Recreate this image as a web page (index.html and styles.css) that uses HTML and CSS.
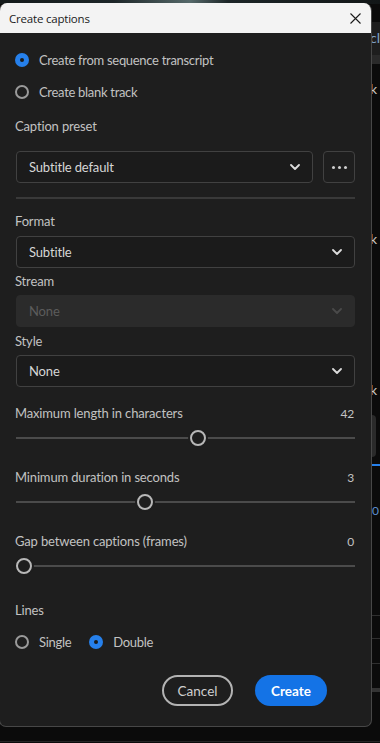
FILE: index.html
```html
<!DOCTYPE html>
<html lang="en">
<head>
<meta charset="utf-8">
<title>Create captions</title>
<link rel="stylesheet" href="styles.css">
</head>
<body>
<div class="backdrop">
  <div class="bg-top"></div>
  <div class="bg-band1"><span class="bg-text blue">cl</span></div>
  <div class="bg-band2"></div>
  <span class="bg-text k1">k</span>
  <span class="bg-text k2">k</span>
  <span class="bg-text k3">k</span>
  <div class="bg-box"></div>
  <div class="bg-blue"></div>
  <span class="bg-text blue n00">0</span>
  <div class="bg-line l1"></div>
  <div class="bg-line l2"></div>
  <div class="bg-line l3"></div>
  <div class="bg-band3"></div>
  <div class="bg-line l4"></div>
</div>

<div class="dialog">
  <div class="titlebar">
    <span class="title">Create captions</span>
    <svg class="close" width="11" height="11" viewBox="0 0 11 11"><path d="M0.5 0.5 L10.5 10.5 M10.5 0.5 L0.5 10.5" stroke="#1a1a1a" stroke-width="1.1" fill="none"/></svg>
  </div>

  <div class="content">
    <div class="radio-row">
      <span class="radio checked"></span><span class="rlabel">Create from sequence transcript</span>
    </div>
    <div class="radio-row">
      <span class="radio"></span><span class="rlabel">Create blank track</span>
    </div>

    <div class="label preset-label">Caption preset</div>
    <div class="preset-row">
      <div class="select grow">
        <span>Subtitle default</span>
        <svg class="chev" width="10" height="6" viewBox="0 0 10 6"><path d="M1 1 L5 5 L9 1" stroke="#dcdcdc" stroke-width="1.8" fill="none" stroke-linecap="round" stroke-linejoin="round"/></svg>
      </div>
      <div class="more">
        <span class="dot"></span><span class="dot"></span><span class="dot"></span>
      </div>
    </div>
    <div class="sep"></div>

    <div class="label format-label">Format</div>
    <div class="select mt5">
      <span>Subtitle</span>
      <svg class="chev" width="10" height="6" viewBox="0 0 10 6"><path d="M1 1 L5 5 L9 1" stroke="#dcdcdc" stroke-width="1.8" fill="none" stroke-linecap="round" stroke-linejoin="round"/></svg>
    </div>
    <div class="label mt3">Stream</div>
    <div class="select disabled mt4">
      <span>None</span>
      <svg class="chev" width="10" height="6" viewBox="0 0 10 6"><path d="M1 1 L5 5 L9 1" stroke="#4a4a4a" stroke-width="1.8" fill="none" stroke-linecap="round" stroke-linejoin="round"/></svg>
    </div>
    <div class="label mt4">Style</div>
    <div class="select mt4">
      <span>None</span>
      <svg class="chev" width="10" height="6" viewBox="0 0 10 6"><path d="M1 1 L5 5 L9 1" stroke="#dcdcdc" stroke-width="1.8" fill="none" stroke-linecap="round" stroke-linejoin="round"/></svg>
    </div>

    <div class="label slider-label first">
      <span>Maximum length in characters</span><span class="val">42</span>
    </div>
    <div class="slider"><div class="track"></div><span class="thumb" style="left: calc(0.538 * (100% - 16px));"></span></div>

    <div class="label slider-label">
      <span>Minimum duration in seconds</span><span class="val">3</span>
    </div>
    <div class="slider"><div class="track"></div><span class="thumb" style="left: calc(0.375 * (100% - 16px));"></span></div>

    <div class="label slider-label">
      <span>Gap between captions (frames)</span><span class="val">0</span>
    </div>
    <div class="slider"><div class="track"></div><span class="thumb" style="left: 0;"></span></div>

    <div class="label lines-label">Lines</div>
    <div class="lines-row">
      <div class="radio-inline"><span class="radio"></span><span class="rlabel">Single</span></div>
      <div class="radio-inline"><span class="radio checked"></span><span class="rlabel">Double</span></div>
    </div>

    <div class="buttons">
      <button class="btn cancel">Cancel</button>
      <button class="btn create">Create</button>
    </div>
  </div>
</div>
</body>
</html>
```

FILE: styles.css
```css
* { box-sizing: border-box; }

html, body {
  margin: 0;
  padding: 0;
}

body {
  width: 380px;
  height: 743px;
  overflow: hidden;
  background: #0b0b0b;
  position: relative;
  font-family: Lato, "Noto Sans", sans-serif;
  padding-top: 3px;
}

/* background app (free canvas behind the dialog window) */
.backdrop { position: absolute; inset: 0; }
.bg-top {
  position: absolute; left: 0; top: 0; width: 380px; height: 4px;
  background: linear-gradient(90deg, #141a1b 0%, #1d2628 30%, #56696a 50%, #1c2527 60%, #121617 100%);
}
.bg-band1 {
  position: absolute; left: 0; top: 22px; width: 380px; height: 33px;
  background: #1e1e1e;
}
.bg-band2 {
  position: absolute; left: 0; top: 55px; width: 380px; height: 9px;
  background: #2a2a2a;
}
.bg-text {
  position: absolute; font-size: 14px; color: #c8c8c8; left: 370px;
}
.bg-band1 .bg-text { top: 7px; }
.blue { color: #7fa0c8; }
.k1 { top: 80px; }
.k2 { top: 230px; }
.k3 { top: 381px; }
.bg-box {
  position: absolute; left: 366px; top: 415px; width: 10px; height: 42px;
  background: #2a2a2a; border-radius: 4px;
}
.bg-blue {
  position: absolute; left: 372px; top: 464px; width: 8px; height: 2px; background: #2680eb;
}
.n00 { top: 503px; font-size: 12px; color: #5d8fd0; left: 372px; }
.bg-line { position: absolute; left: 372px; width: 8px; height: 1px; background: #2f2f2f; }
.l1 { top: 615px; }
.l2 { top: 638px; }
.l3 { top: 663px; }
.l4 { top: 741px; left: 0; width: 380px; background: #262626; }
.bg-band3 {
  position: absolute; left: 372px; top: 688px; width: 8px; height: 4px; background: #333;
}

/* dialog window */
.dialog {
  position: relative;
  margin-left: -1px;
  width: 373px;
  height: 724px;
  background: #1e1e1e;
  border: 1px solid #474747;
  border-top: none;
  border-radius: 8px 8px 7px 7px;
  overflow: hidden;
}

.titlebar {
  height: 30px;
  background: #f3f3f3;
  display: flex;
  align-items: center;
  justify-content: space-between;
  padding: 0 10px 0 9px;
}
.title {
  font-family: "Open Sans", "Noto Sans", sans-serif;
  font-size: 11.5px;
  color: #1a1a1a;
  letter-spacing: -0.2px;
}
.close { display: block; }

.content {
  padding: 11px 16px 0 16px;
  color: #c2c2c2;
  font-size: 13px;
}

.radio-row {
  height: 32px;
  display: flex;
  align-items: center;
}
.radio {
  width: 14px;
  height: 14px;
  border-radius: 50%;
  border: 2px solid #9a9a9a;
  display: inline-block;
  flex: none;
  margin-left: -1px;
  position: relative;
}
.radio.checked {
  border: none;
  background: #2680eb;
}
.radio.checked::after {
  content: "";
  position: absolute;
  left: 5px; top: 5px;
  width: 4px; height: 4px;
  border-radius: 50%;
  background: #1a1a1a;
}
.rlabel {
  margin-left: 10px;
  color: #c2c2c2;
  letter-spacing: -0.3px;
}

.label {
  height: 20px;
  display: flex;
  align-items: center;
  color: #c2c2c2;
  font-size: 13px;
  margin-left: -1px;
  letter-spacing: -0.15px;
}
.preset-label { margin-top: 8px; }

.preset-row {
  display: flex;
  gap: 10px;
  margin-top: 15px;
}
.select {
  height: 32px;
  border: 1px solid #414141;
  border-radius: 4px;
  background: #1b1b1b;
  display: flex;
  align-items: center;
  justify-content: space-between;
  padding: 0 12px 0 12px;
  color: #d6d6d6;
  font-size: 13px;
  letter-spacing: -0.15px;
}
.select.grow { flex: 1; }
.select.disabled {
  background: #2b2b2b;
  border-color: #2b2b2b;
  color: #5c5c5c;
}
.chev { display: block; }

.more {
  width: 32px;
  height: 32px;
  border: 1px solid #414141;
  border-radius: 4px;
  display: flex;
  align-items: center;
  justify-content: center;
  gap: 3px;
}
.dot {
  width: 3px; height: 3px; border-radius: 50%; background: #cfcfcf;
}

.sep {
  height: 2px;
  background: #393939;
  margin-top: 14px;
}

.format-label { margin-top: 12px; }
.mt3 { margin-top: 3px; }
.mt4 { margin-top: 4px; }
.mt5 { margin-top: 5px; }

.slider-label {
  justify-content: space-between;
  margin-top: 19px;
}
.slider-label.first { margin-top: 16px; }
.val { font-size: 12px; margin-right: 1px; }

.slider {
  position: relative;
  height: 20px;
  margin-top: 5px;
  display: flex;
  align-items: center;
}
.track {
  width: 100%;
  height: 2px;
  background: #4b4b4b;
}
.thumb {
  position: absolute;
  top: 2px;
  width: 16px;
  height: 16px;
  border-radius: 50%;
  border: 2px solid #b8b8b8;
  background: #1e1e1e;
  box-shadow: 0 0 0 2px #1e1e1e;
}

.lines-label { margin-top: 24px; }
.lines-row {
  display: flex;
  align-items: center;
  height: 20px;
  margin-top: 12px;
  gap: 19px;
}
.radio-inline { display: flex; align-items: center; }

.buttons {
  display: flex;
  justify-content: flex-end;
  gap: 22px;
  margin-top: 23px;
  padding-right: 28px;
}
.btn {
  height: 31px;
  border-radius: 16px;
  font-family: Lato, "Noto Sans", sans-serif;
  font-size: 13.5px;
  padding: 0;
}
.cancel {
  width: 71px;
  background: transparent;
  border: 2px solid #b3b3b3;
  color: #cfcfcf;
}
.create {
  width: 72px;
  background: #1473e6;
  border: none;
  color: #ffffff;
  font-weight: 700;
}
```
